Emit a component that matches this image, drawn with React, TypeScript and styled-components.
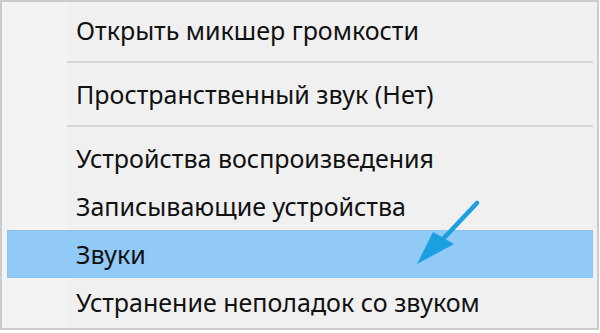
import React from "react";
import styled, { createGlobalStyle } from "styled-components";

const GlobalStyle = createGlobalStyle`
  html, body {
    margin: 0;
    padding: 0;
    background: #ffffff;
  }
  body {
    font-family: "Noto Sans", "Open Sans", sans-serif;
  }
`;

const Menu = styled.div`
  position: relative;
  box-sizing: border-box;
  width: 599px;
  border: 2px solid #cbcbcb;
  padding: 4px 0 2px 0;
  background: linear-gradient(to right, #f3f3f3 0, #f3f3f3 66px, #f0f0f0 66px);
  display: flex;
  flex-direction: column;
`;

const Item = styled.div<{ active?: boolean }>`
  height: 48px;
  margin: 0 4px 0 5px;
  padding-left: 69px;
  box-sizing: border-box;
  display: flex;
  align-items: center;
  font-size: 25px;
  color: #111;
  background: ${(p) => (p.active ? "#91c9f7" : "transparent")};
  outline: ${(p) => (p.active ? "1px solid #8ac2f0" : "none")};
  outline-offset: -1px;
  white-space: nowrap;
`;

const Separator = styled.div`
  height: 16px;
  display: flex;
  align-items: center;
  padding: 0 4px 0 65px;
  &::after {
    content: "";
    flex: 1;
    height: 2px;
    background: #d7d7d7;
  }
`;

const Pointer = styled.svg`
  position: absolute;
  left: 410px;
  top: 194px;
  pointer-events: none;
`;

function Arrow() {
  return (
    <Pointer width="72" height="74" viewBox="0 0 72 74">
      <line x1="65" y1="7" x2="31" y2="43" stroke="#1a9fe0" strokeWidth="4.5" strokeLinecap="round" />
      <polygon points="5,68 21,36 42,48" fill="#1a9fe0" />
    </Pointer>
  );
}

const items: Array<string | null> = [
  "Открыть микшер громкости",
  null,
  "Пространственный звук (Нет)",
  null,
  "Устройства воспроизведения",
  "Записывающие устройства",
  "Звуки",
  "Устранение неполадок со звуком",
];

export default function App() {
  return (
    <>
      <GlobalStyle />
      <Menu>
        {items.map((label, i) =>
          label === null ? (
            <Separator key={i} />
          ) : (
            <Item key={i} active={label === "Звуки"}>
              {label}
            </Item>
          )
        )}
        <Arrow />
      </Menu>
    </>
  );
}
